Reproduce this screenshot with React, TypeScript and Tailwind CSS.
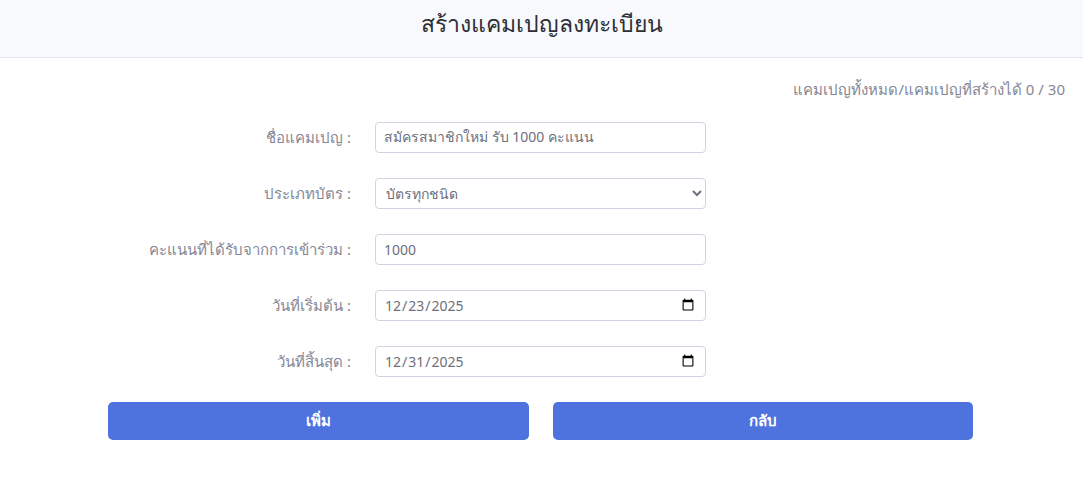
import { useState } from "react";

function FieldRow({ label, children }: { label: string; children: React.ReactNode }) {
  return (
    <div className="flex items-center h-[31px]">
      <label className="w-[244px] pr-px text-right text-[15px] text-[#858796] select-none">
        {label}
      </label>
      <div className="ml-[23px] w-[331px]">{children}</div>
    </div>
  );
}

const inputCls =
  "w-full h-[31px] px-[8px] text-[14px] text-[#6e707e] bg-white border border-[#d1d3e2] rounded-[4px] outline-none";

export default function App() {
  const [name, setName] = useState("สมัครสมาชิกใหม่ รับ 1000 คะแนน");
  const [cardType, setCardType] = useState("all");
  const [points, setPoints] = useState("1000");
  const [start, setStart] = useState("2025-12-23");
  const [end, setEnd] = useState("2025-12-31");

  return (
    <div className="w-[1083px] h-[477px] bg-white font-['Noto_Sans','Liberation_Sans',sans-serif]">
      <div className="h-[58px] bg-[#f8f9fc] border-b border-[#e3e6f0] flex items-center justify-center">
        <h1 className="text-[23px] text-[#2e2f37] font-medium -mt-[10px]">สร้างแคมเปญลงทะเบียน</h1>
      </div>
      <div className="px-[18px] pt-[20px] text-right text-[15px] text-[#858796]">
        แคมเปญทั้งหมด/แคมเปญที่สร้างได้ 0 / 30
      </div>
      <div className="w-[865px] ml-[108px] mt-[21px]">
        <div className="flex flex-col gap-[25px]">
          <FieldRow label="ชื่อแคมเปญ :">
            <input className={inputCls} value={name} onChange={(e) => setName(e.target.value)} />
          </FieldRow>
          <FieldRow label="ประเภทบัตร :">
            <select
              className={inputCls + " pl-[6px]"}
              value={cardType}
              onChange={(e) => setCardType(e.target.value)}
            >
              <option value="all">บัตรทุกชนิด</option>
            </select>
          </FieldRow>
          <FieldRow label="คะแนนที่ได้รับจากการเข้าร่วม :">
            <input className={inputCls} value={points} onChange={(e) => setPoints(e.target.value)} />
          </FieldRow>
          <FieldRow label="วันที่เริ่มต้น :">
            <input type="date" className={inputCls} value={start} onChange={(e) => setStart(e.target.value)} />
          </FieldRow>
          <FieldRow label="วันที่สิ้นสุด :">
            <input type="date" className={inputCls} value={end} onChange={(e) => setEnd(e.target.value)} />
          </FieldRow>
        </div>
        <div className="flex gap-[24px] mt-[25px]">
          <button className="flex-1 h-[38px] rounded-[5px] bg-[#4e73df] text-white text-[15px] font-bold">
            เพิ่ม
          </button>
          <button className="flex-1 h-[38px] rounded-[5px] bg-[#4e73df] text-white text-[15px] font-bold">
            กลับ
          </button>
        </div>
      </div>
    </div>
  );
}
